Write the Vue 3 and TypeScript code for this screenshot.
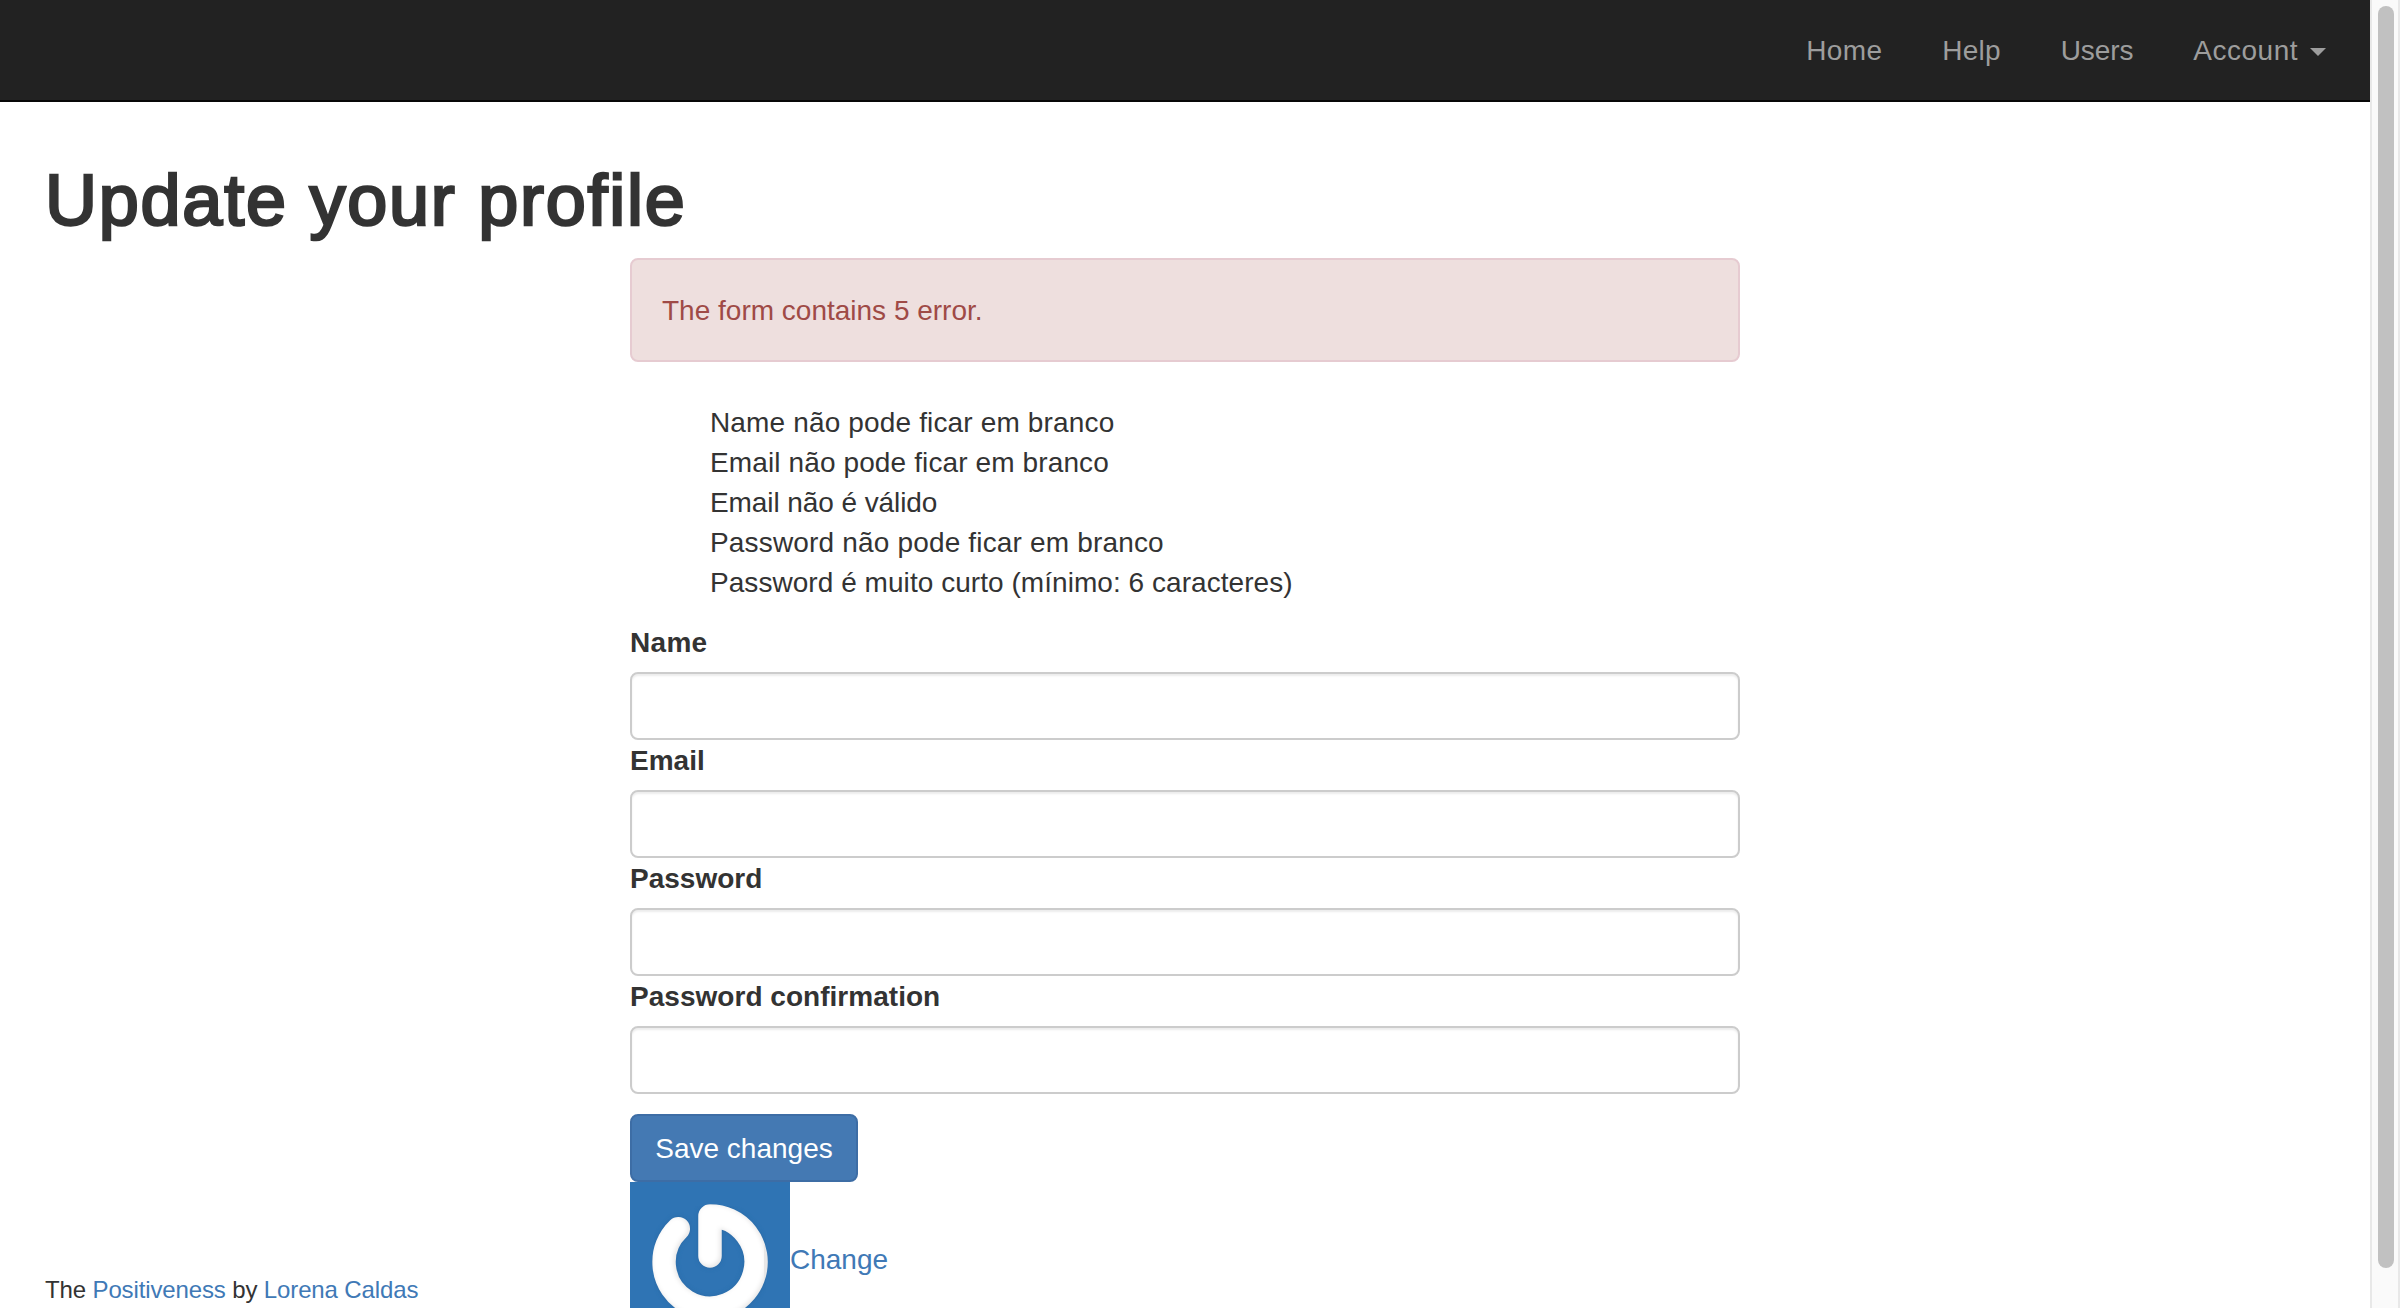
<script setup lang="ts">
interface TextItem {
  text: string
  spacing: number
}

const navLinks: TextItem[] = [
  { text: 'Home', spacing: 0.35 },
  { text: 'Help', spacing: 0.2 },
  { text: 'Users', spacing: -0.1 },
]

const errors: TextItem[] = [
  { text: 'Name não pode ficar em branco', spacing: 0.15 },
  { text: 'Email não pode ficar em branco', spacing: 0.12 },
  { text: 'Email não é válido', spacing: -0.08 },
  { text: 'Password não pode ficar em branco', spacing: 0.17 },
  { text: 'Password é muito curto (mínimo: 6 caracteres)', spacing: 0.05 },
]

const fields = [
  { id: 'name', label: 'Name', type: 'text', spacing: 0.3 },
  { id: 'email', label: 'Email', type: 'email', spacing: 0 },
  { id: 'password', label: 'Password', type: 'password', spacing: 0 },
  { id: 'confirmation', label: 'Password confirmation', type: 'password', spacing: 0.03 },
]
</script>

<template>
  <div class="window">
    <div class="page">
      <header class="navbar">
        <nav class="nav">
          <a v-for="link in navLinks" :key="link.text" :style="{ letterSpacing: link.spacing + 'px' }">{{ link.text }}</a>
          <a class="account"><span>Account</span><b class="caret"></b></a>
        </nav>
      </header>
      <main>
        <h1>Update your profile</h1>
        <div class="column">
          <div class="alert"><span>The form contains 5 error.</span></div>
          <ul>
            <li v-for="e in errors" :key="e.text"><span :style="{ letterSpacing: e.spacing + 'px' }">{{ e.text }}</span></li>
          </ul>
          <form @submit.prevent>
            <template v-for="f in fields" :key="f.id">
              <label :for="f.id" :style="{ letterSpacing: f.spacing + 'px' }">{{ f.label }}</label>
              <input :id="f.id" :type="f.type" />
            </template>
            <button type="submit">Save changes</button>
          </form>
          <div class="gravatar">
            <svg width="160" height="160" viewBox="0 0 160 160" fill="none">
              <defs>
                <filter id="bevel" x="-10%" y="-10%" width="120%" height="120%">
                  <feGaussianBlur stdDeviation="2.2" />
                </filter>
                <mask id="glyph">
                  <path d="M48.3 46.7A46 46 0 1 0 80 34V74" stroke="#fff" stroke-width="23.5" stroke-linecap="round" stroke-linejoin="round" />
                </mask>
              </defs>
              <rect width="160" height="160" fill="#2f74b4" />
              <path d="M48.3 46.7A46 46 0 1 0 80 34V74" stroke="#28649c" stroke-width="24.5" stroke-linecap="round" stroke-linejoin="round" filter="url(#bevel)" opacity=".5" />
              <g mask="url(#glyph)">
                <rect width="160" height="160" fill="#e8e7e7" />
                <path d="M46.8 45.7A46 46 0 1 0 78.500 33V72.500" stroke="#fff" stroke-width="22" stroke-linecap="round" stroke-linejoin="round" filter="url(#bevel)" />
              </g>
            </svg>
            <a>Change</a>
          </div>
        </div>
        <footer>The <a>Positiveness</a> by <a>Lorena Caldas</a></footer>
      </main>
    </div>
    <aside class="scrollbar"><div class="thumb"></div></aside>
  </div>
</template>

<style>
body {
  margin: 0;
  overflow: hidden;
}
</style>

<style scoped>
* {
  box-sizing: border-box;
}
.window {
  display: flex;
  width: 2400px;
  height: 1308px;
  overflow: hidden;
  background: #fff;
  color: #333;
  font: 28px/40px "Liberation Sans", Arial, sans-serif;
}
.page {
  width: 2370px;
  height: 1308px;
  overflow: hidden;
}
.navbar {
  height: 102px;
  background: #222;
  border-bottom: 2px solid #080808;
}
.nav {
  display: flex;
  justify-content: flex-end;
  padding-right: 14px;
}
.nav a {
  padding: 31px 30px 29px;
  color: #9d9d9d;
}
.nav .account {
  display: flex;
  align-items: center;
  letter-spacing: .5px;
}
.caret {
  margin-left: 12px;
  border-top: 8px solid;
  border-left: 8px solid transparent;
  border-right: 8px solid transparent;
  margin-top: 2px;
}
main {
  position: relative;
  height: 1206px;
}
h1 {
  margin: 0;
  padding: 59px 0 0 45px;
  height: 156px;
  font-size: 72px;
  line-height: 79px;
  font-weight: 400;
  letter-spacing: 1.75px;
  -webkit-text-stroke: 2.6px #333;
}
.column {
  width: 1110px;
  margin-left: 630px;
}
.alert {
  height: 104px;
  padding: 31px 30px 29px;
  margin-bottom: 40px;
  border: 2px solid #e6cbd1;
  border-radius: 8px;
  background: #eedfde;
  color: #9f4a46;
}
ul {
  list-style: none;
  margin: 0 0 20px;
  padding: 1px 0 0 80px;
  height: 200px;
}
form {
  display: flex;
  flex-direction: column;
  align-items: flex-start;
}
label {
  height: 41px;
  padding-top: 1px;
  margin-bottom: 9px;
  font-weight: 700;
}
input {
  display: block;
  width: 100%;
  height: 68px;
  padding: 12px 24px;
  border: 2px solid #ccc;
  border-radius: 8px;
  background: #fff;
  box-shadow: inset 0 2px 2px rgba(0, 0, 0, .075);
  font: inherit;
  outline: none;
}
button {
  width: 228px;
  height: 68px;
  margin-top: 20px;
  padding: 2px 0 0;
  border: 2px solid #3d6da5;
  border-radius: 8px;
  background: #4479b3;
  color: #fff;
  font: inherit;
  white-space: nowrap;
}
.gravatar {
  display: flex;
  height: 160px;
}
.gravatar svg {
  flex: none;
}
.gravatar a {
  margin-top: 58px;
}
.gravatar a,
footer a {
  color: #4079b6;
}
footer {
  position: absolute;
  left: 45px;
  bottom: 1px;
  font-size: 24px;
  line-height: 34px;
  letter-spacing: -.13px;
  white-space: nowrap;
}
.scrollbar {
  width: 30px;
  height: 1308px;
  padding: 6px 4px 0 6px;
  border: solid #e8e8e8;
  border-width: 0 2px;
  background: #fafafa;
}
.thumb {
  width: 16px;
  height: 1262px;
  border-radius: 8px;
  background: #c1c1c1;
}
</style>
